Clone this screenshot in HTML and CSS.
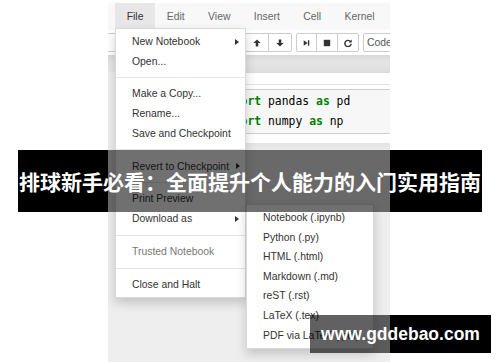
FILE: index.html
```html
<!DOCTYPE html>
<html lang="zh">
<head>
<meta charset="utf-8">
<title>Jupyter File menu</title>
<link rel="stylesheet" href="styles.css">
</head>
<body>
<div class="shot">
  <div class="topgap"></div>
  <div class="menubar">
    <span class="mitem active">File</span>
    <span class="mitem">Edit</span>
    <span class="mitem">View</span>
    <span class="mitem">Insert</span>
    <span class="mitem">Cell</span>
    <span class="mitem">Kernel</span>
  </div>
  <div class="toolbar">
    <div class="btngroup g0"><span class="btn wide"></span></div>
    <div class="btngroup">
      <span class="btn b24"><svg viewBox="0 0 10 10" width="8" height="8"><path d="M5 .5 9.5 5H6.6v4.5H3.4V5H.5z" fill="#333"/></svg></span>
      <span class="btn b24"><svg viewBox="0 0 10 10" width="8" height="8"><path d="M5 9.5 .5 5h2.9V.5h3.2V5h2.9z" fill="#333"/></svg></span>
    </div>
    <div class="btngroup">
      <span class="btn b21"><svg viewBox="0 0 10 10" width="7" height="8"><path d="M1 1v8l5.6-4z M7 1h2v8H7z" fill="#333"/></svg></span>
      <span class="btn b22"><svg viewBox="0 0 10 10" width="8" height="8"><rect x="1" y="1" width="8" height="8" fill="#333"/></svg></span>
      <span class="btn b22"><svg viewBox="0 0 10 10" width="8" height="8"><path d="M8.2 3.4A3.9 3.9 0 1 0 8.9 6" fill="none" stroke="#333" stroke-width="1.8"/><path d="M9.6.6v3.9H5.7z" fill="#333"/></svg></span>
    </div>
    <div class="select">Code</div>
  </div>
  <div class="site">
    <div class="container">
      <div class="cell">
        <div class="input"><div class="line"><span class="kw">import</span> pandas <span class="kw">as</span> pd</div><div class="line"><span class="kw">import</span> numpy <span class="kw">as</span> np</div></div>
      </div>
    </div>
  </div>

  <ul class="dropdown filemenu">
    <li class="item">New Notebook<span class="caret"></span></li>
    <li class="item">Open...</li>
    <li class="divider"></li>
    <li class="item">Make a Copy...</li>
    <li class="item">Rename...</li>
    <li class="item">Save and Checkpoint</li>
    <li class="divider"></li>
    <li class="item">Revert to Checkpoint<span class="caret near"></span></li>
    <li class="divider"></li>
    <li class="item">Print Preview</li>
    <li class="item">Download as<span class="caret"></span></li>
    <li class="divider"></li>
    <li class="item muted">Trusted Notebook</li>
    <li class="divider"></li>
    <li class="item">Close and Halt</li>
  </ul>

  <ul class="dropdown submenu">
    <li class="item">Notebook (.ipynb)</li>
    <li class="item">Python (.py)</li>
    <li class="item">HTML (.html)</li>
    <li class="item">Markdown (.md)</li>
    <li class="item">reST (.rst)</li>
    <li class="item">LaTeX (.tex)</li>
    <li class="item">PDF via LaTeX (.pdf)</li>
  </ul>
</div>
<div class="banner title">排球新手必看：全面提升个人能力的入门实用指南</div>
<div class="banner url">www.gddebao.com</div>
</body>
</html>
```

FILE: styles.css
```css
html, body {
  margin: 0;
  background: #fff;
}
body {
  width: 500px;
  height: 362px;
  padding-left: 108px;
  box-sizing: border-box;
  position: relative;
  overflow: hidden;
}
.shot {
  width: 282px;
  height: 362px;
  position: relative;
  overflow: hidden;
  display: flex;
  flex-direction: column;
  font-family: "Liberation Sans", Arial, sans-serif;
  font-size: 10.4px;
  color: #333;
}
.topgap {
  height: 3px;
  background: #fff;
}
.menubar {
  height: 27px;
  background: #f8f8f8;
  display: flex;
  padding-left: 7px;
}
.mitem {
  padding: 0 11.7px;
  line-height: 27px;
  color: #666;
}
.mitem.active {
  background: #e7e7e7;
  color: #333;
}
.toolbar {
  height: 25px;
  box-sizing: border-box;
  padding-top: 3px;
  display: flex;
  align-items: flex-start;
  gap: 4px;
  background: #fff;
}
.btngroup {
  display: flex;
}
.g0 {
  margin-left: -4px;
  width: 137px;
}
.btn {
  height: 19px;
  box-sizing: border-box;
  border: 1px solid #ccc;
  background: #fff;
  display: flex;
  align-items: center;
  justify-content: center;
}
.btn + .btn {
  margin-left: -1px;
}
.btngroup .btn:first-child {
  border-radius: 2px 0 0 2px;
}
.btngroup .btn:last-child {
  border-radius: 0 2px 2px 0;
}
.wide { width: 137px; }
.b24 { width: 24px; }
.b21 { width: 21px; }
.b22 { width: 22px; }
.select {
  height: 19px;
  width: 60px;
  flex: none;
  box-sizing: border-box;
  border: 1px solid #ccc;
  border-radius: 2px;
  padding-left: 3px;
  line-height: 17px;
  color: #555;
}
.site {
  flex: 1;
  background: linear-gradient(to bottom, #d9d9d9 0, #e4e4e4 6px, #e8e8e8 17px, #eee 17px);
}
.container {
  margin: 17px 0 0 30px;
  width: 400px;
  box-sizing: border-box;
  height: 71px;
  background: #fff;
  border-top: 1px solid #dcdcdc;
  padding-top: 11px;
  box-shadow: 0 0 10px rgba(87, 87, 87, 0.15);
}
.cell {
  border-top: 1px solid #e2e2e2;
  padding-top: 4px;
}
.input {
  margin-left: 40px;
  border: 1px solid #cfcfcf;
  background: #f7f7f7;
  padding: 2px 0 0 41px;
  height: 41px;
  box-sizing: content-box;
  font-family: "DejaVu Sans Mono", "Liberation Mono", monospace;
  font-size: 11.4px;
  line-height: 19.5px;
  color: #000;
  white-space: pre;
}
.kw {
  color: #008000;
  font-weight: bold;
}
.dropdown {
  position: absolute;
  margin: 0;
  padding: 3px 0;
  list-style: none;
  background: #fff;
  border: 1px solid rgba(0, 0, 0, 0.15);
  box-shadow: 0 5px 10px rgba(0, 0, 0, 0.18);
  box-sizing: border-box;
}
.filemenu {
  left: 7px;
  top: 28px;
  width: 131px;
}
.submenu {
  left: 138px;
  top: 204px;
  width: 128px;
}
.item {
  line-height: 19.6px;
  height: 19.6px;
  padding: 0 6px 0 16px;
  display: flex;
  align-items: center;
  white-space: nowrap;
  color: #333;
}
.item.muted {
  color: #777;
}
.divider {
  height: 1px;
  margin: 6.15px 0;
  background: #e5e5e5;
}
.caret {
  margin-left: auto;
  width: 0;
  height: 0;
  border-left: 4px solid #333;
  border-top: 3px solid transparent;
  border-bottom: 3px solid transparent;
}
.caret.near {
  margin-left: auto;
  margin-right: -1px;
}
.banner {
  position: absolute;
  color: #fff;
  font-weight: bold;
  display: flex;
  align-items: center;
  justify-content: center;
  white-space: nowrap;
}
.title {
  left: 18px;
  top: 150px;
  width: 464px;
  height: 62px;
  font-size: 21px;
  font-family: "Noto Sans CJK SC", "Noto Sans", sans-serif;
  background: linear-gradient(to right, #000 90px, rgba(0, 0, 0, 0.56) 90px, rgba(0, 0, 0, 0.56) 372px, #000 372px);
}
.url {
  left: 310px;
  top: 315px;
  width: 181px;
  height: 38px;
  font-size: 17.5px;
  font-family: "Liberation Sans", Arial, sans-serif;
  background: linear-gradient(to right, rgba(0, 0, 0, 0.62) 80px, #000 80px);
}
```
